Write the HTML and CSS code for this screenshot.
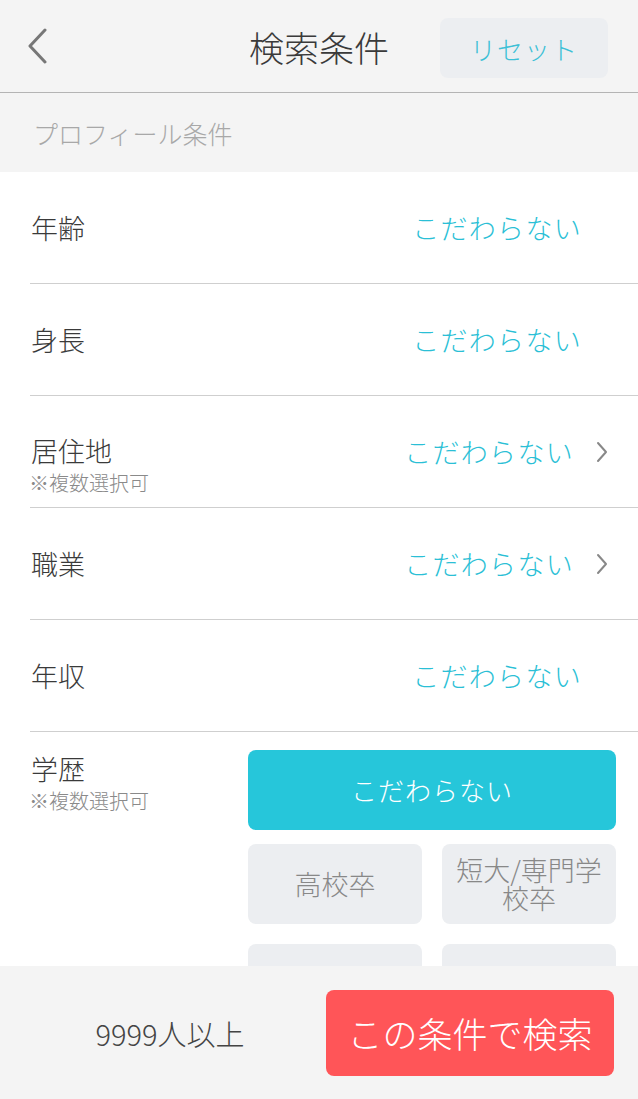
FILE: index.html
```html
<!DOCTYPE html>
<html lang="ja">
<head>
    <meta charset="UTF-8">
    <meta name="viewport" content="width=device-width, initial-scale=1.0">
    <title>検索条件</title>
    <link rel="stylesheet" href="styles.css">
</head>
<body>
    <div class="screen">
        <header class="top-bar">
            <button class="back" type="button" aria-label="戻る">
                <svg width="22" height="36" viewBox="0 0 22 36"><path d="M19 2 L4 18 L19 34" fill="none" stroke="#777" stroke-width="3" stroke-linecap="round" stroke-linejoin="round"/></svg>
            </button>
            <h1 class="title">検索条件</h1>
            <button class="reset" type="button">リセット</button>
        </header>

        <div class="content">
            <div class="section-head">プロフィール条件</div>
            <div class="list">
                <div class="row">
                    <div class="label">年齢</div>
                    <div class="value">こだわらない</div>
                </div>
                <div class="row">
                    <div class="label">身長</div>
                    <div class="value">こだわらない</div>
                </div>
                <div class="row">
                    <div class="label">居住地<small>※複数選択可</small></div>
                    <div class="value has-arrow">こだわらない
                        <svg class="arrow" width="12" height="22" viewBox="0 0 12 22"><path d="M2 2 L10 11 L2 20" fill="none" stroke="#888" stroke-width="2" stroke-linecap="round" stroke-linejoin="round"/></svg>
                    </div>
                </div>
                <div class="row">
                    <div class="label">職業</div>
                    <div class="value has-arrow">こだわらない
                        <svg class="arrow" width="12" height="22" viewBox="0 0 12 22"><path d="M2 2 L10 11 L2 20" fill="none" stroke="#888" stroke-width="2" stroke-linecap="round" stroke-linejoin="round"/></svg>
                    </div>
                </div>
                <div class="row">
                    <div class="label">年収</div>
                    <div class="value">こだわらない</div>
                </div>
                <div class="row row-choices">
                    <div class="label">学歴<small>※複数選択可</small></div>
                    <div class="choices">
                        <button class="choice wide selected" type="button">こだわらない</button>
                        <button class="choice" type="button">高校卒</button>
                        <button class="choice" type="button">短大/専門学校卒</button>
                        <button class="choice" type="button" aria-label="大学卒"></button>
                        <button class="choice" type="button" aria-label="大学院卒"></button>
                    </div>
                </div>
            </div>
        </div>

        <footer class="bottom-bar">
            <div class="count">9999人以上</div>
            <button class="search" type="button">この条件で検索</button>
        </footer>
    </div>
</body>
</html>
```

FILE: styles.css
```css
* {
    box-sizing: border-box;
}
html, body {
    margin: 0;
    padding: 0;
    height: 100%;
}
body {
    font-family: "Noto Sans CJK JP", "Noto Sans", sans-serif;
    font-weight: 300;
    background-color: #f4f4f4;
    color: #333;
}
button {
    font-family: inherit;
    font-weight: inherit;
    border: none;
    cursor: pointer;
}
.screen {
    height: 100vh;
    display: flex;
    flex-direction: column;
    overflow: hidden;
}
.top-bar {
    height: 93px;
    flex: none;
    display: flex;
    align-items: center;
    padding: 0 30px 0 26px;
    border-bottom: 1px solid #b4b4b4;
    position: relative;
}
.back {
    background: none;
    padding: 0;
    width: 24px;
    height: 40px;
    display: flex;
    align-items: center;
}
.title {
    position: absolute;
    left: 0;
    right: 0;
    margin: 0;
    text-align: center;
    font-size: 35px;
    font-weight: 300;
    color: #3a3a3a;
    pointer-events: none;
}
.reset {
    margin-left: auto;
    margin-top: 4px;
    width: 168px;
    height: 60px;
    border-radius: 8px;
    background-color: #eceef1;
    color: #3cc0d6;
    font-size: 26px;
    letter-spacing: 1px;
}
.content {
    flex: 1;
    overflow: hidden;
}
.section-head {
    height: 79px;
    padding: 0 33px;
    display: flex;
    align-items: center;
    font-size: 25px;
    color: #a8a8a8;
}
.list {
    background-color: #fff;
    padding-left: 30px;
}
.row {
    height: 112px;
    display: flex;
    align-items: center;
    justify-content: space-between;
    border-bottom: 1px solid #cfcfcf;
    padding-right: 32px;
}
.label {
    font-size: 27px;
    color: #3a3a3a;
    display: flex;
    flex-direction: column;
    line-height: 1.25;
    padding-left: 1px;
}
.label small {
    font-size: 20px;
    color: #8a8a8a;
    margin-left: -2px;
    margin-top: 2px;
}
.row .label:has(small) {
    padding-top: 26px;
}
.value {
    font-size: 27px;
    color: #2bbfd6;
    letter-spacing: 1.3px;
    padding-right: 24px;
}
.value.has-arrow {
    padding-right: 0;
    display: flex;
    align-items: center;
    gap: 22px;
    margin-right: -2px;
}
.row-choices {
    height: auto;
    align-items: flex-start;
    padding: 18px 22px 40px 0;
    border-bottom: none;
}
.row.row-choices .label {
    padding-top: 2px;
}
.choices {
    width: 368px;
    display: grid;
    grid-template-columns: 1fr 1fr;
    gap: 14px 20px;
}
.choice {
    height: 80px;
    border-radius: 8px;
    background-color: #eceef1;
    color: #888;
    font-size: 27px;
    line-height: 1.05;
    padding: 0 8px;
}
.choice.wide {
    grid-column: span 2;
}
.choice.selected {
    background-color: #26c6da;
    color: #fff;
    font-size: 26px;
    letter-spacing: 1px;
}
.choices .choice:nth-child(n+4) {
    margin-top: 6px;
}
.bottom-bar {
    height: 133px;
    flex: none;
    display: flex;
    align-items: center;
    padding: 0 24px 0 0;
    background-color: #f4f4f4;
}
.count {
    flex: 1;
    text-align: center;
    font-size: 29px;
    color: #444;
    padding-left: 14px;
}
.search {
    width: 288px;
    height: 86px;
    border-radius: 8px;
    background-color: #ff5558;
    color: #fff;
    font-size: 35px;
}
```
